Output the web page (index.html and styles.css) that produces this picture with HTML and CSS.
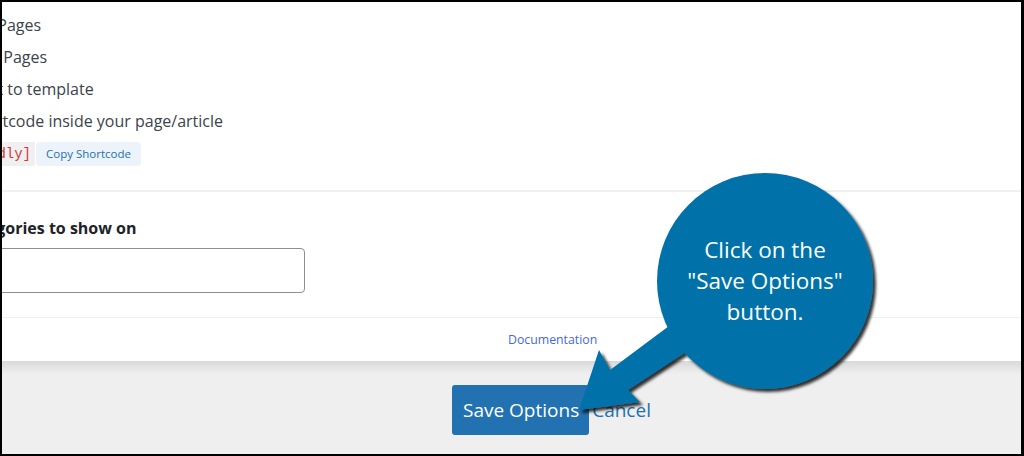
FILE: index.html
```html
<!DOCTYPE html>
<html lang="en">
<head>
<meta charset="utf-8">
<title>Options</title>
<link rel="stylesheet" href="styles.css">
</head>
<body>
<div class="frame">
  <div class="card">
    <div class="options">
      <p class="opt opt-a">All Pages</p>
      <p class="opt opt-b">All Pages</p>
      <p class="opt opt-c">Insert to template</p>
      <p class="opt opt-d">Add shortcode inside your page/article</p>
      <div class="shortcode-row">
        <code class="code">[friendly]</code>
        <button class="copy-btn" type="button">Copy Shortcode</button>
      </div>
    </div>
    <div class="section">
      <label class="field-label" for="cats">Select categories to show on</label>
      <input class="field-input" id="cats" type="text">
    </div>
    <div class="doc-row">
      <a class="doc-link" href="#">Documentation</a>
    </div>
  </div>
  <div class="footer">
    <button class="save-btn" type="button">Save Options</button>
    <a class="cancel-link" href="#">Cancel</a>
  </div>
</div>
<svg class="callout" width="1024" height="456" viewBox="0 0 1024 456" aria-hidden="true">
  <defs>
    <filter id="sh" x="-20%" y="-20%" width="140%" height="140%">
      <feDropShadow dx="3" dy="3" stdDeviation="1.6" flood-color="#000" flood-opacity="0.8"/>
    </filter>
  </defs>
  <g filter="url(#sh)" fill="#0372a9">
    <circle cx="765" cy="281" r="108"/>
    <polygon points="669,326 610,370 599,350 579,410 640,402 628,390 692,348"/>
  </g>
</svg>
<div class="callout-text">Click on the<br>"Save Options"<br>button.</div>
</body>
</html>
```

FILE: styles.css
```css
* { box-sizing: border-box; }
html, body { margin: 0; padding: 0; }
body {
  position: relative;
  width: 1024px;
  height: 456px;
  overflow: hidden;
  font-family: "Open Sans", "Noto Sans", sans-serif;
  background: #000;
}
.frame {
  width: 1024px;
  height: 456px;
  border: 2px solid #000;
  border-right-width: 3px;
  display: flex;
  flex-direction: column;
  background: #f0f0f0;
  overflow: hidden;
}
.card {
  height: 359px;
  background: #fff;
  display: flex;
  flex-direction: column;
  overflow: hidden;
  flex: none;
}
.options {
  padding-top: 7px;
  height: 190px;
  border-bottom: 2px solid #f0f0f1;
}
.opt {
  margin: 0;
  font-size: 16px;
  line-height: 32px;
  color: #3c434a;
  white-space: nowrap;
}
.opt-a { margin-left: -27px; }
.opt-b { margin-left: -21px; }
.opt-c { margin-left: -42px; }
.opt-d { margin-left: -67px; }
.shortcode-row {
  display: flex;
  align-items: center;
  gap: 1px;
  margin-top: 5px;
  height: 24px;
}
.code {
  margin-left: -59px;
  height: 24px;
  padding: 0 4px 0 4px;
  background: #f0f0f1;
  color: #d63638;
  font-family: "Liberation Mono", "DejaVu Sans Mono", monospace;
  font-size: 14px;
  line-height: 24px;
}
.copy-btn {
  height: 24px;
  padding: 0 10px;
  border: 0;
  border-radius: 4px;
  background: #ecf3fa;
  color: #2271b1;
  font-family: "Open Sans", "Noto Sans", sans-serif;
  font-size: 11.5px;
  line-height: 24px;
}
.section {
  display: flex;
  flex-direction: column;
  padding-top: 26px;
  height: 126px;
  border-bottom: 1px solid #f0f0f1;
}
.field-label {
  margin-left: -92px;
  font-size: 16px;
  font-weight: 700;
  line-height: 20px;
  color: #1d2327;
  white-space: nowrap;
}
.field-input {
  margin-top: 10px;
  margin-left: -20px;
  width: 323px;
  height: 45px;
  border: 1px solid #8c8f94;
  border-radius: 4px;
  background: #fff;
}
.doc-row {
  flex: 1;
  display: flex;
  align-items: center;
  padding-left: 506px;
}
.doc-link {
  font-size: 12.3px;
  color: #4a66d8;
  text-decoration: none;
}
.footer {
  flex: 1;
  display: flex;
  align-items: flex-start;
  padding: 24px 0 0 450px;
  background: linear-gradient(#d9d9d9 0, #ececec 11px, #efefef 14px, #efefef 100%);
}
.save-btn {
  height: 50px;
  padding: 0 10px 0 11px;
  border: 0;
  border-radius: 3px;
  background: #2271b1;
  color: #fff;
  font-family: "Open Sans", "Noto Sans", sans-serif;
  font-size: 19px;
}
.cancel-link {
  margin-left: 3px;
  margin-top: 12px;
  font-size: 19px;
  line-height: 26px;
  color: #2271b1;
  text-decoration: none;
}
.callout {
  position: absolute;
  left: 0;
  top: 0;
  pointer-events: none;
}
.callout-text {
  position: absolute;
  left: 645px;
  top: 234px;
  width: 240px;
  text-align: center;
  color: #fff;
  font-family: "Open Sans", "Noto Sans", sans-serif;
  font-size: 22.5px;
  line-height: 31px;
}
```
